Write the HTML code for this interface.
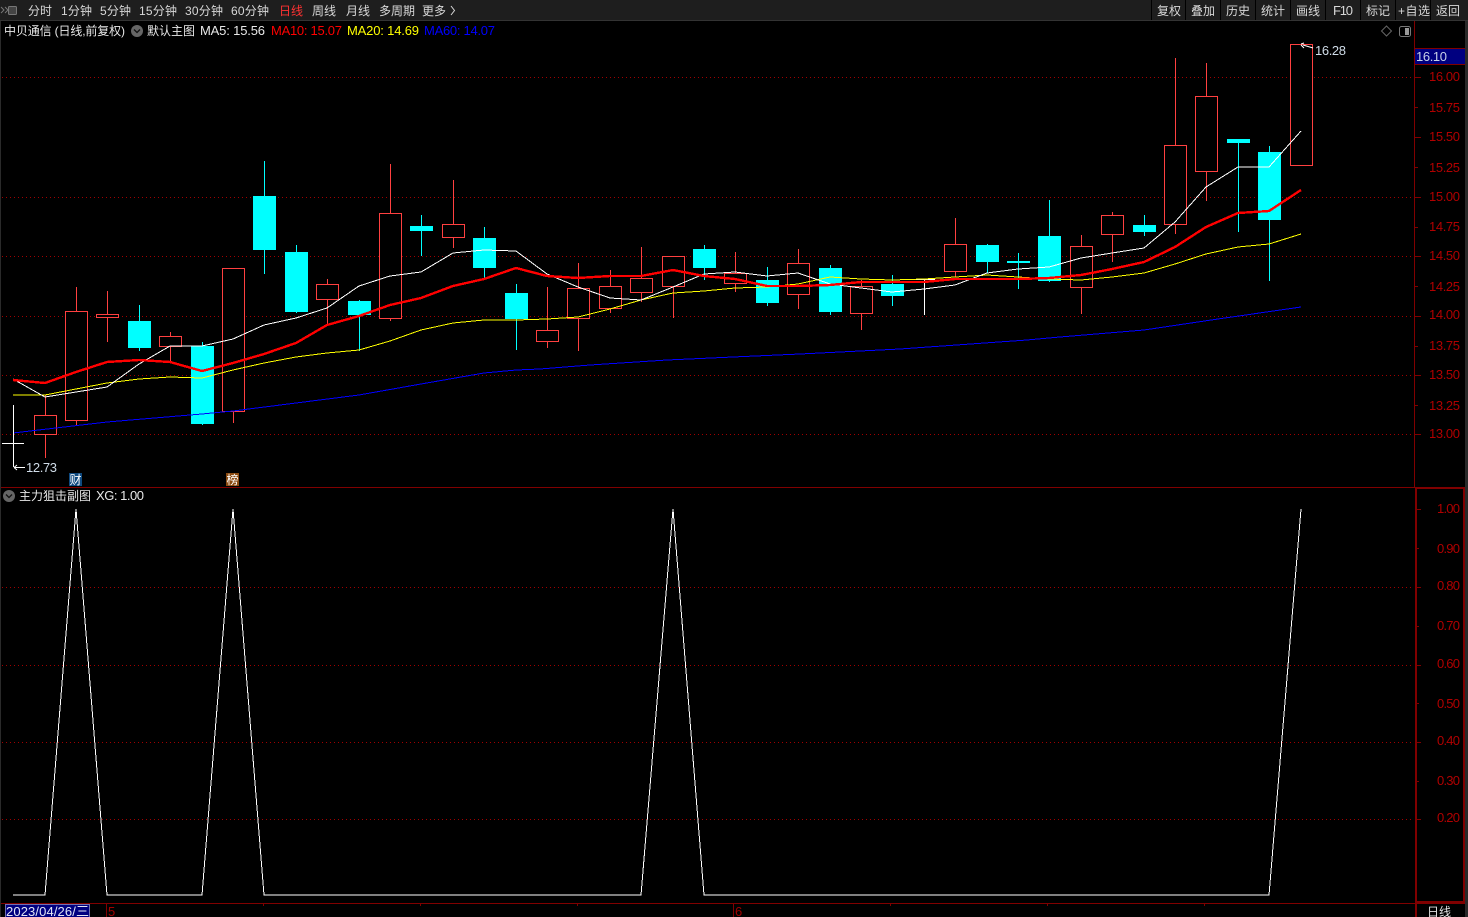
<!DOCTYPE html>
<html><head><meta charset="utf-8"><style>
html,body{margin:0;padding:0;background:#000;width:1468px;height:917px;overflow:hidden}
svg{display:block}
text{font-family:"Liberation Sans","Noto Sans CJK SC",sans-serif;font-size:12px}
.n{fill:#d8d8d8}
.m{font-size:13px}
.a{fill:#b00000;font-size:13px}
</style></head><body>
<svg width="1468" height="917" viewBox="0 0 1468 917" xmlns="http://www.w3.org/2000/svg">
<rect width="1468" height="917" fill="#000"/>
<rect x="0" y="0" width="1" height="917" fill="#2a2a2a"/>
<rect x="1465" y="0" width="3" height="917" fill="#2a2a2a"/>
<rect x="0" y="0" width="1468" height="21" fill="#1e1e1e"/>
<rect x="0" y="20" width="1468" height="1" fill="#333"/>
<g fill="#000" shape-rendering="crispEdges">
<rect x="1151" y="0" width="1" height="20"/><rect x="1185" y="0" width="1" height="20"/><rect x="1220" y="0" width="1" height="20"/><rect x="1255" y="0" width="1" height="20"/><rect x="1290" y="0" width="1" height="20"/><rect x="1325" y="0" width="1" height="20"/><rect x="1360" y="0" width="1" height="20"/><rect x="1395" y="0" width="1" height="20"/><rect x="1430" y="0" width="1" height="20"/>
</g>
<!-- top-left icon -->
<path d="M1 7l3 3-3 3M5 7l3 3-3 3" fill="none" stroke="#777" stroke-width="1"/>
<rect x="8.500" y="6.500" width="8" height="8" rx="1" fill="#444" stroke="#777" stroke-width="1"/>
<!-- nav -->
<g class="n">
<text class="n" x="28" y="15" textLength="24">分时</text>
<text class="n" x="61" y="15" textLength="31">1分钟</text>
<text class="n" x="100" y="15" textLength="31">5分钟</text>
<text class="n" x="139" y="15" textLength="38">15分钟</text>
<text class="n" x="185" y="15" textLength="38">30分钟</text>
<text class="n" x="231" y="15" textLength="38">60分钟</text>
<text x="279" y="15" fill="#ff3232" textLength="24">日线</text>
<text class="n" x="312" y="15" textLength="24">周线</text>
<text class="n" x="346" y="15" textLength="24">月线</text>
<text class="n" x="379" y="15" textLength="36">多周期</text>
<text class="n" x="422" y="15" textLength="24">更多</text>
<path d="M451 6l3.500 4.500-3.500 4.500" fill="none" stroke="#d8d8d8" stroke-width="1"/>
<text class="n" x="1157" y="15" textLength="24">复权</text>
<text class="n" x="1191" y="15" textLength="24">叠加</text>
<text class="n" x="1226" y="15" textLength="24">历史</text>
<text class="n" x="1261" y="15" textLength="24">统计</text>
<text class="n" x="1296" y="15" textLength="24">画线</text>
<text class="n m" x="1333" y="15" textLength="20">F10</text>
<text class="n" x="1366" y="15" textLength="24">标记</text>
<text class="n" x="1398" y="15" textLength="32">+自选</text>
<text class="n" x="1436" y="15" textLength="24">返回</text>
</g>
<!-- info row -->
<text x="4" y="35" fill="#e8e8e8" textLength="121">中贝通信 (日线,前复权)</text>
<circle cx="137" cy="31" r="6" fill="#666"/><path d="M134 29.500l3 3 3-3" fill="none" stroke="#111" stroke-width="1.300"/>
<text x="147" y="35" fill="#e8e8e8" textLength="48">默认主图</text>
<text class="m" x="200" y="35" fill="#e8e8e8" textLength="65">MA5: 15.56</text>
<text class="m" x="271" y="35" fill="#ff0000" textLength="71">MA10: 15.07</text>
<text class="m" x="347" y="35" fill="#ffff00" textLength="72">MA20: 14.69</text>
<text class="m" x="424" y="35" fill="#0000ff" textLength="71">MA60: 14.07</text>
<path d="M1386.500 26l5 5-5 5-5-5z" fill="none" stroke="#666"/>
<rect x="1399.500" y="26.500" width="11" height="10" rx="2" fill="none" stroke="#777"/><rect x="1405" y="28" width="4" height="7" fill="#999"/>
<!-- grid -->
<g stroke="#a00000" stroke-dasharray="1 3" shape-rendering="crispEdges" fill="none">
<path d="M2 77.500H1414M2 197.500H1414M2 256.500H1414M2 316.500H1414M2 375.500H1414M2 434.500H1414"/>
<path d="M2 587.500H1414M2 665.500H1414M2 742.500H1414M2 819.500H1414"/>
</g>
<!-- axis lines -->
<g fill="#800000" shape-rendering="crispEdges">
<rect x="1414" y="21" width="1" height="467"/>
<rect x="1415" y="488" width="2" height="429"/>
<rect x="1463" y="488" width="2" height="415"/>
<rect x="1" y="487" width="1464" height="1"/>
<rect x="1415" y="487" width="50" height="2"/>
<rect x="1" y="903" width="1464" height="1"/>
<rect x="1415" y="901" width="50" height="2"/>
<rect x="1415" y="48" width="50" height="1"/><rect x="1415" y="64" width="50" height="1"/>
<rect x="1415" y="77" width="6" height="1"/><rect x="1415" y="107" width="3" height="1"/><rect x="1415" y="137" width="6" height="1"/><rect x="1415" y="167" width="3" height="1"/><rect x="1415" y="197" width="6" height="1"/><rect x="1415" y="227" width="3" height="1"/><rect x="1415" y="256" width="6" height="1"/><rect x="1415" y="286" width="3" height="1"/><rect x="1415" y="316" width="6" height="1"/><rect x="1415" y="346" width="3" height="1"/><rect x="1415" y="375" width="6" height="1"/><rect x="1415" y="405" width="3" height="1"/><rect x="1415" y="434" width="6" height="1"/>
<rect x="1417" y="509" width="4" height="1"/><rect x="1417" y="548" width="2" height="1"/><rect x="1417" y="587" width="4" height="1"/><rect x="1417" y="626" width="2" height="1"/><rect x="1417" y="665" width="4" height="1"/><rect x="1417" y="703" width="2" height="1"/><rect x="1417" y="742" width="4" height="1"/><rect x="1417" y="781" width="2" height="1"/><rect x="1417" y="819" width="4" height="1"/>
<rect x="106" y="904" width="1" height="13"/><rect x="733" y="904" width="1" height="13"/>
<rect x="263" y="904" width="1" height="2"/><rect x="420" y="904" width="1" height="2"/><rect x="577" y="904" width="1" height="2"/><rect x="890" y="904" width="1" height="2"/><rect x="1047" y="904" width="1" height="2"/><rect x="1204" y="904" width="1" height="2"/>
</g>
<rect x="1415" y="49" width="50" height="15" fill="#000080"/>
<text class="m" x="1416" y="61" fill="#c8d0e8" textLength="31">16.10</text>
<!-- axis labels -->
<g>
<text class="a" x="1429" y="81" textLength="31">16.00</text>
<text class="a" x="1429" y="112" textLength="31">15.75</text>
<text class="a" x="1429" y="141" textLength="31">15.50</text>
<text class="a" x="1429" y="172" textLength="31">15.25</text>
<text class="a" x="1429" y="201" textLength="31">15.00</text>
<text class="a" x="1429" y="231" textLength="31">14.75</text>
<text class="a" x="1429" y="260" textLength="31">14.50</text>
<text class="a" x="1429" y="291" textLength="31">14.25</text>
<text class="a" x="1429" y="319" textLength="31">14.00</text>
<text class="a" x="1429" y="350" textLength="31">13.75</text>
<text class="a" x="1429" y="379" textLength="31">13.50</text>
<text class="a" x="1429" y="410" textLength="31">13.25</text>
<text class="a" x="1429" y="438" textLength="31">13.00</text>
<text class="a" x="1437" y="513" textLength="23">1.00</text>
<text class="a" x="1437" y="553" textLength="23">0.90</text>
<text class="a" x="1437" y="590" textLength="23">0.80</text>
<text class="a" x="1437" y="630" textLength="23">0.70</text>
<text class="a" x="1437" y="668" textLength="23">0.60</text>
<text class="a" x="1437" y="708" textLength="23">0.50</text>
<text class="a" x="1437" y="745" textLength="23">0.40</text>
<text class="a" x="1437" y="785" textLength="23">0.30</text>
<text class="a" x="1437" y="822" textLength="23">0.20</text>
</g>
<!-- cyan candles -->
<g shape-rendering="crispEdges">
<path fill="none" stroke="#00ffff" d="M139.500 305V351M202.500 342V425M264.500 161V274M296.500 245V313M359.500 300V351M421.500 215V256M484.500 227V278M516.500 284V350M704.500 245V280M767.500 267V306M830.500 265V315M892.500 275V306M987.500 244V273M1018.500 253V289M1049.500 200V282M1144.500 215V236M1238.500 139V232M1269.500 146V281"/>
<g fill="#00ffff">
<rect x="128" y="321" width="23" height="27"/><rect x="191" y="346" width="23" height="78"/><rect x="253" y="196" width="23" height="54"/><rect x="285" y="252" width="23" height="60"/><rect x="348" y="301" width="23" height="14"/><rect x="410" y="226" width="23" height="5"/><rect x="473" y="238" width="23" height="30"/><rect x="505" y="293" width="23" height="26"/><rect x="693" y="249" width="23" height="19"/><rect x="756" y="280" width="23" height="23"/><rect x="819" y="268" width="23" height="44"/><rect x="881" y="284" width="23" height="12"/><rect x="976" y="245" width="23" height="17"/><rect x="1007" y="261" width="23" height="2"/><rect x="1038" y="236" width="23" height="45"/><rect x="1133" y="225" width="23" height="7"/><rect x="1227" y="139" width="23" height="4"/><rect x="1258" y="152" width="23" height="68"/>
</g>
<!-- red candles -->
<path fill="none" stroke="#ff4040" d="M45.500 395V415M45.500 435V458M76.500 287V311M76.500 421V425M107.500 291V314M107.500 318V342M170.500 332V336M170.500 346V361M233.500 411V423M327.500 279V284M327.500 299V324M390.500 164V213M390.500 318V321M453.500 180V224M453.500 237V248M547.500 287V330M547.500 341V348M578.500 263V288M578.500 318V351M610.500 270V286M610.500 308V313M641.500 247V278M641.500 292V302M673.500 287V318M735.500 252V273M735.500 283V292M798.500 249V263M798.500 295V309M861.500 280V286M861.500 313V330M955.500 218V244M955.500 271V277M1081.500 235V246M1081.500 288V314M1112.500 212V215M1112.500 234V262M1175.500 58V145M1175.500 224V234M1206.500 63V96M1206.500 171V201"/>
<g fill="#000" stroke="#ff4040">
<rect x="34.500" y="415.500" width="22" height="19"/><rect x="65.500" y="311.500" width="22" height="109"/><rect x="96.500" y="314.500" width="22" height="3"/><rect x="159.500" y="336.500" width="22" height="10"/><rect x="222.500" y="268.500" width="22" height="143"/><rect x="316.500" y="284.500" width="22" height="15"/><rect x="379.500" y="213.500" width="22" height="105"/><rect x="442.500" y="224.500" width="22" height="13"/><rect x="536.500" y="330.500" width="22" height="11"/><rect x="567.500" y="288.500" width="22" height="30"/><rect x="599.500" y="286.500" width="22" height="22"/><rect x="630.500" y="278.500" width="22" height="14"/><rect x="662.500" y="256.500" width="22" height="30"/><rect x="724.500" y="273.500" width="22" height="10"/><rect x="787.500" y="263.500" width="22" height="31"/><rect x="850.500" y="286.500" width="22" height="27"/><rect x="944.500" y="244.500" width="22" height="27"/><rect x="1070.500" y="246.500" width="22" height="41"/><rect x="1101.500" y="215.500" width="22" height="19"/><rect x="1164.500" y="145.500" width="22" height="79"/><rect x="1195.500" y="96.500" width="22" height="75"/><rect x="1290.500" y="44.500" width="22" height="121"/>
</g>
<path stroke="#fff" fill="none" d="M924.500 279V315M914 279.500H935"/>
</g>
<!-- moving averages -->
<g fill="none" shape-rendering="crispEdges">
<polyline stroke="#0000ff" stroke-width="1" points="13,433 107,422 202,414 233,411 296,403 359,395 421,384 484,373 516,370 540,369 590,365 667,360 733,357 800,354 900,349 1027,340 1060,337 1144,330 1218,319 1301,307"/>
<polyline stroke="#ffff00" stroke-width="1" points="13,395 45,395 76,389 107,383 139,379 170,377 202,378 233,370 264,363 296,357 327,353 359,350 390,341 421,330 453,323 484,320 516,320 547,319 578,317 610,309 641,300 673,293 704,291 735,288 767,287 798,284 830,277 861,279 892,280 924,279 955,277 987,275 1018,277 1049,279 1081,280 1112,277 1144,273 1175,264 1206,254 1238,247 1269,244 1301,234"/>
<polyline stroke="#ffffff" stroke-width="1" points="13,379 45,397 76,392 107,387 139,364 170,346 202,346 233,339 264,325 296,318 327,308 359,286 390,276 421,272 453,253 484,250 516,251 547,274 578,287 610,298 641,300 673,287 704,274 735,272 767,276 798,273 830,284 861,288 892,292 924,289 955,285 987,273 1018,269 1049,267 1081,258 1112,253 1144,248 1175,222 1206,187 1238,167 1269,167 1301,131"/>
<polyline stroke="#ff0000" stroke-width="2.400" points="13,380 45,383 76,372 107,362 139,360 170,362 202,371 233,363 264,354 296,343 327,325 359,316 390,305 421,298 453,286 484,279 516,268 547,276 578,278 610,276 641,276 673,270 704,276 735,279 767,286 798,286 830,285 861,282 892,282 924,282 955,279 987,279 1018,279 1049,278 1081,275 1112,269 1144,262 1175,247 1206,227 1238,213 1269,211 1301,190"/>
</g>
<!-- sub chart line -->
<polyline fill="none" stroke="#fff" stroke-width="1" shape-rendering="crispEdges" points="13,895 45,895 76,509 107,895 202,895 233,509 264,895 641,895 673,509 704,895 1269,895 1301,509"/>
<!-- low / high markers -->
<g shape-rendering="crispEdges" fill="none" stroke="#fff">
<path d="M13.500 405V467M2 443.500H24M14 467.500H25"/>
</g>
<path d="M14 467.500l3-2.500M14 467.500l3 2.500" stroke="#fff" fill="none"/>
<text class="m" x="26" y="472" fill="#d0dce8" textLength="31">12.73</text>
<path d="M1313 48l-10-3M1301 44l3-1M1301 45l3 3" stroke="#fff" fill="none"/>
<text class="m" x="1315" y="55" fill="#d0dce8" textLength="31">16.28</text>
<!-- markers -->
<rect x="69" y="473" width="13" height="13" fill="#0f4a80"/>
<text x="69.500" y="484" fill="#fff" textLength="12">财</text>
<rect x="226" y="473" width="13" height="13" fill="#8b4a10"/>
<text x="226.500" y="484" fill="#fff" textLength="12">榜</text>
<!-- sub header -->
<circle cx="9" cy="496" r="6" fill="#666"/><path d="M6 494.500l3 3 3-3" fill="none" stroke="#111" stroke-width="1.300"/>
<text x="19" y="500" fill="#e8e8e8" textLength="72">主力狙击副图</text>
<text class="m" x="96" y="500" fill="#e8e8e8" textLength="48">XG: 1.00</text>
<!-- bottom -->
<rect x="5.500" y="904.500" width="84" height="13" fill="#000080" stroke="#7070b0"/>
<text class="m" x="6" y="916" fill="#e0e4f4" textLength="83">2023/04/26/三</text>
<text class="m" x="108" y="916" fill="#a00000" textLength="7">5</text>
<text class="m" x="735" y="916" fill="#a00000" textLength="7">6</text>
<text x="1427" y="916" fill="#e0e0e0" textLength="24">日线</text>
</svg>
</body></html>
